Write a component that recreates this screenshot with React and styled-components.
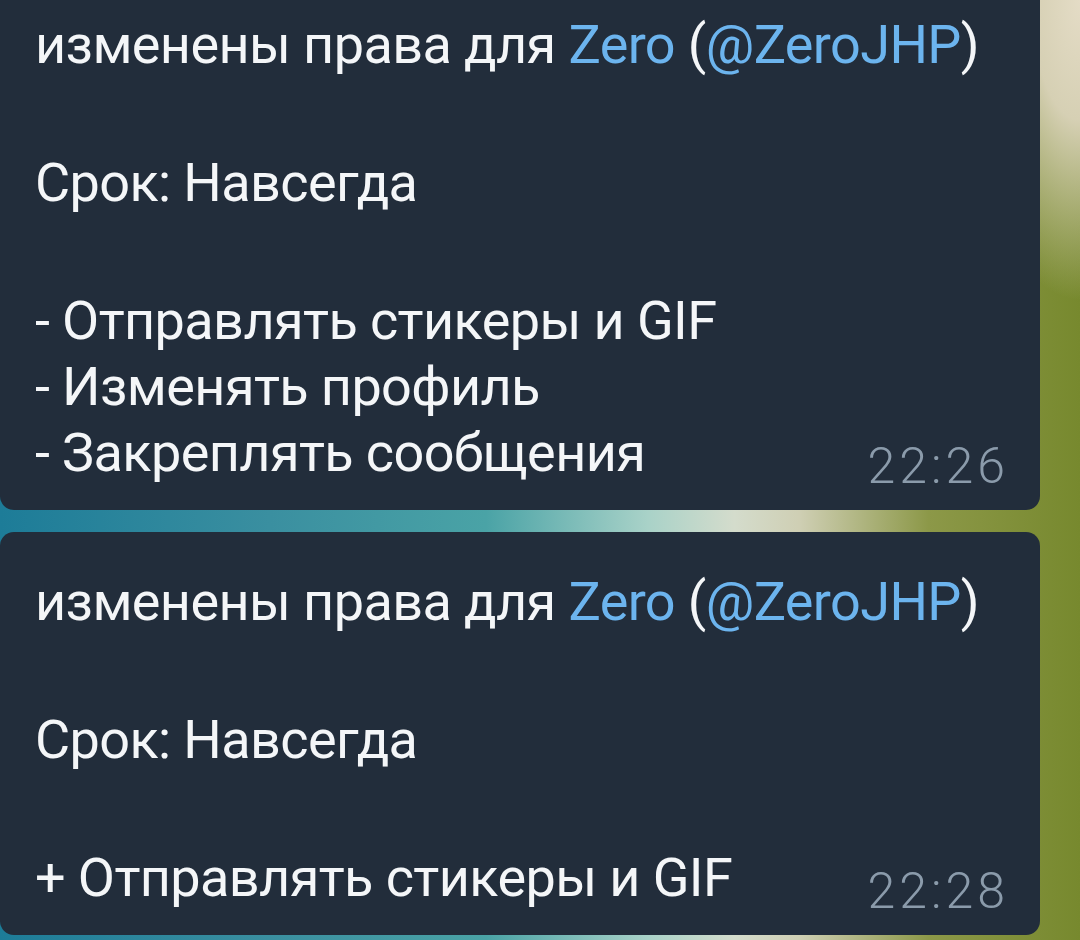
import styled, { createGlobalStyle } from 'styled-components'

const GlobalStyle = createGlobalStyle`
html, body {
    margin: 0;
    padding: 0;
    background: #1e2a36;
}
body {
    font-family: Roboto, "Noto Sans", "Liberation Sans", sans-serif;
    -webkit-font-smoothing: antialiased;
}
`

const messages = [
    {
        id: 1,
        cropped: true,
        period: 'Навсегда',
        rights: ['- Отправлять стикеры и GIF', '- Изменять профиль', '- Закреплять сообщения'],
        time: '22:26',
    },
    {
        id: 2,
        period: 'Навсегда',
        rights: ['+ Отправлять стикеры и GIF'],
        time: '22:28',
    },
]

const App = () => {
    return (
        <Page>
            <GlobalStyle />
            <Feed>
                {messages.map((msg) => (
                    <Bubble key={msg.id} cropped={msg.cropped}>
                        <Line>
                            изменены права для <Link>Zero</Link> (<Link>@ZeroJHP</Link>)
                        </Line>
                        <Blank />
                        <Line>Срок: {msg.period}</Line>
                        <Blank />
                        {msg.rights.map((r, i) =>
                            i === msg.rights.length - 1 ? (
                                <LastRow key={r}>
                                    <Line>{r}</Line>
                                    <Time>{msg.time}</Time>
                                </LastRow>
                            ) : (
                                <Line key={r}>{r}</Line>
                            )
                        )}
                    </Bubble>
                ))}
            </Feed>
        </Page>
    )
}

const Page = styled.div`
width: 1080px;
height: 940px;
overflow: hidden;
background:
    radial-gradient(ellipse 120px 300px at 100% 0%, #e4dcc6 0%, #d6d0b4 40%, rgba(200,196,150,0) 100%),
    linear-gradient(to right, #1d7c98 0%, #3a8fa0 25%, #4aa3a6 45%, #a9d2c8 60%, #d4dccc 68%, #cfcfb4 74%, #8c9848 86%, #77892e 100%);
`

const Feed = styled.div`
display: flex;
flex-direction: column;
gap: 22px;
width: 1040px;
`

const Bubble = styled.div`
background: #222d3b;
color: #f4f6f8;
border-radius: ${(p) => (p.cropped ? '0 0 14px 14px' : '14px')};
padding: ${(p) => (p.cropped ? '12px' : '37px')} 35px 24px 35px;
display: flex;
flex-direction: column;
`

const Line = styled.div`
font-size: 54px;
line-height: 66px;
height: 66px;
white-space: nowrap;
letter-spacing: -0.6px;
`

const Blank = styled.div`
height: 72px;
`

const Link = styled.span`
color: #6cb4ee;
`

const LastRow = styled.div`
display: flex;
justify-content: space-between;
align-items: flex-end;
`

const Time = styled.span`
font-size: 50px;
font-weight: 300;
letter-spacing: 4px;
color: #8b9bab;
line-height: 52px;
margin-bottom: -6px;
margin-right: -4px;
`

export default App
